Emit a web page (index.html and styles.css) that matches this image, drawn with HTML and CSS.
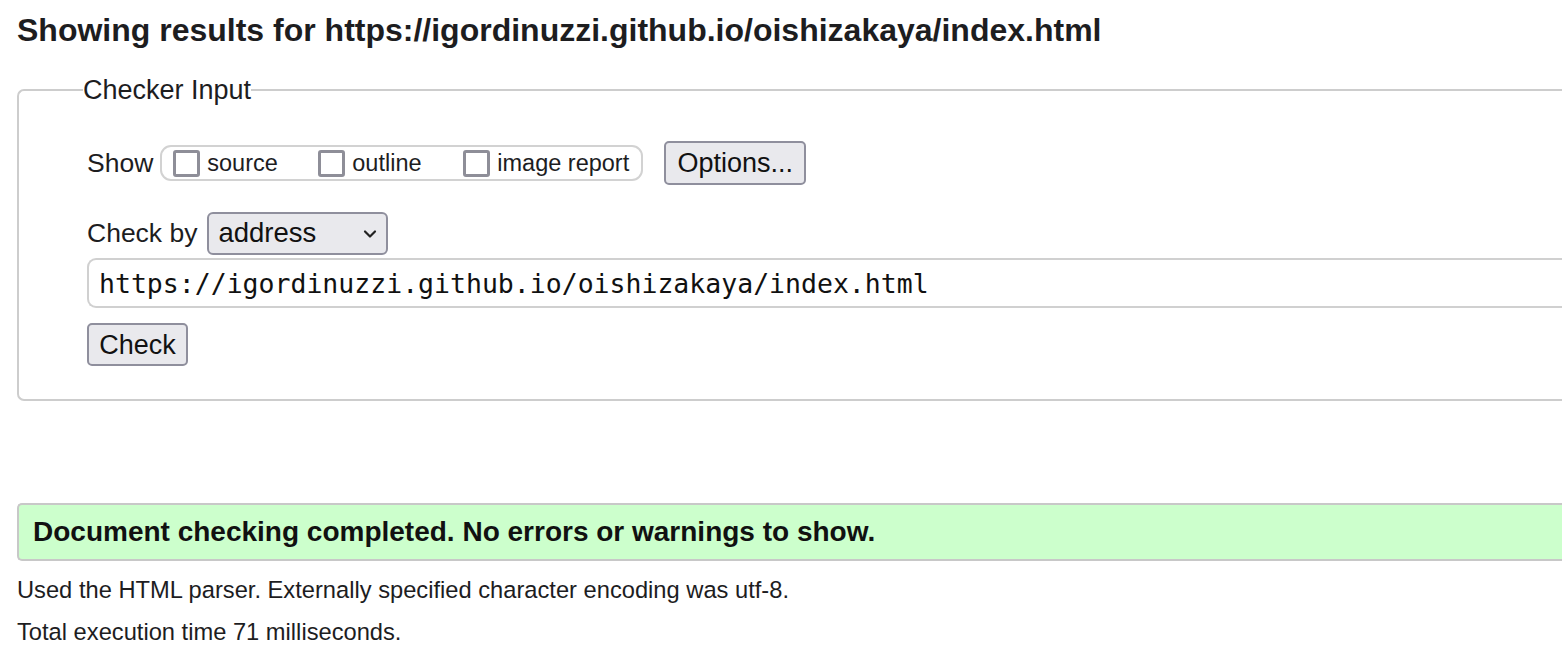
FILE: index.html
```html
<!DOCTYPE html>
<html>
<head>
<meta charset="utf-8">
<link rel="stylesheet" href="styles.css">
</head>
<body>
<div class="page">
  <h2 class="title">Showing results for https://igordinuzzi.github.io/oishizakaya/index.html</h2>
  <fieldset class="checker">
    <legend class="legend">Checker Input</legend>
    <div class="row show-row">
      <span class="label">Show</span>
      <div class="opts">
        <label class="opt"><span class="box"></span>source</label>
        <label class="opt"><span class="box"></span>outline</label>
        <label class="opt"><span class="box"></span>image report</label>
      </div>
      <button class="btn options">Options...</button>
    </div>
    <div class="row by-row">
      <span class="label">Check by</span>
      <div class="select"><span>address</span>
        <svg class="chev" width="14" height="10" viewBox="0 0 14 10"><path d="M2 2.5 L7 7.5 L12 2.5" fill="none" stroke="#222" stroke-width="2.2" stroke-linecap="round" stroke-linejoin="round"/></svg>
      </div>
    </div>
    <div class="url">https://igordinuzzi.github.io/oishizakaya/index.html</div>
    <button class="btn check">Check</button>
  </fieldset>
  <div class="success">Document checking completed. No errors or warnings to show.</div>
  <p class="info first">Used the HTML parser. Externally specified character encoding was utf-8.</p>
  <p class="info">Total execution time 71 milliseconds.</p>
</div>
</body>
</html>
```
FILE: styles.css
```css
html, body {
  margin: 0;
  padding: 0;
  overflow: hidden;
  background: #fff;
}
body {
  font-family: "Liberation Sans", Arial, sans-serif;
  color: #1a1a1a;
}
.page {
  padding-left: 17px;
  padding-top: 12px;
}
.title {
  margin: 0;
  font-size: 32px;
  font-weight: bold;
  line-height: 36px;
  color: #1d1d1f;
  white-space: nowrap;
}
.checker {
  margin: 27px 0 0 0;
  border: 2px solid #cdcdcd;
  border-right: none;
  border-radius: 7px 0 0 7px;
  padding: 0 0 33px 68px;
  min-width: 0;
}
.legend {
  font-size: 27px;
  padding: 0;
  margin-left: -4px;
  color: #1d1d1f;
  line-height: 30px;
}
.row {
  display: flex;
  align-items: center;
}
.label {
  font-size: 26.5px;
  line-height: 30px;
  color: #1d1d1f;
}
.show-row {
  height: 44px;
  margin-top: 36px;
}
.opts {
  display: flex;
  align-items: center;
  margin-left: 7px;
  height: 36px;
  width: 483px;
  box-sizing: border-box;
  border: 2px solid #d2d2d2;
  border-radius: 11px;
  padding-left: 11px;
}
.opt {
  display: flex;
  align-items: center;
  font-size: 23.5px;
  color: #1d1d1f;
  white-space: nowrap;
}
.opt:nth-child(1) { width: 145px; }
.opt:nth-child(2) { width: 145px; }
.box {
  display: inline-block;
  width: 21px;
  height: 21px;
  border: 3px solid #8e8e98;
  border-radius: 3px;
  margin-right: 7px;
  background: #fff;
}
.btn {
  font-family: "Liberation Sans", Arial, sans-serif;
  font-size: 27px;
  color: #111;
  background: #e9e9ed;
  border: 2px solid #8f8f9d;
  border-radius: 5px;
  padding: 0 10px;
  line-height: 30px;
  white-space: nowrap;
}
.options {
  height: 44px;
  width: 142px;
  margin-left: 21px;
  padding: 0;
}
.by-row {
  margin-top: 26px;
  height: 44px;
}
.select {
  margin-left: 10px;
  width: 181px;
  height: 43px;
  box-sizing: border-box;
  background: #e9e9ed;
  border: 2px solid #8f8f9d;
  border-radius: 6px;
  display: flex;
  align-items: center;
  justify-content: space-between;
  padding: 0 9px 0 9px;
  font-size: 27.5px;
  color: #111;
}
.chev {
  margin-top: 2px;
}
.url {
  margin-top: 3px;
  height: 50px;
  box-sizing: border-box;
  border: 2px solid #d0d0d0;
  border-right: none;
  border-radius: 9px 0 0 9px;
  font-family: "DejaVu Sans Mono", monospace;
  font-size: 26.5px;
  display: flex;
  align-items: center;
  padding-left: 10px;
  color: #111;
  white-space: nowrap;
  overflow: hidden;
}
.check {
  margin-top: 15px;
  height: 43px;
  width: 101px;
  padding: 0;
  display: block;
}
.success {
  margin-top: 102px;
  height: 58px;
  box-sizing: border-box;
  background: #ccffcc;
  border: 2px solid #c8c8c8;
  border-right: none;
  border-radius: 5px 0 0 5px;
  display: flex;
  align-items: center;
  padding-left: 14px;
  font-size: 28px;
  font-weight: bold;
  color: #111;
  white-space: nowrap;
}
.info {
  margin: 0;
  font-size: 23.7px;
  line-height: 42px;
  color: #1d1d1f;
  white-space: nowrap;
}
.info.first {
  margin-top: 8px;
}
```
